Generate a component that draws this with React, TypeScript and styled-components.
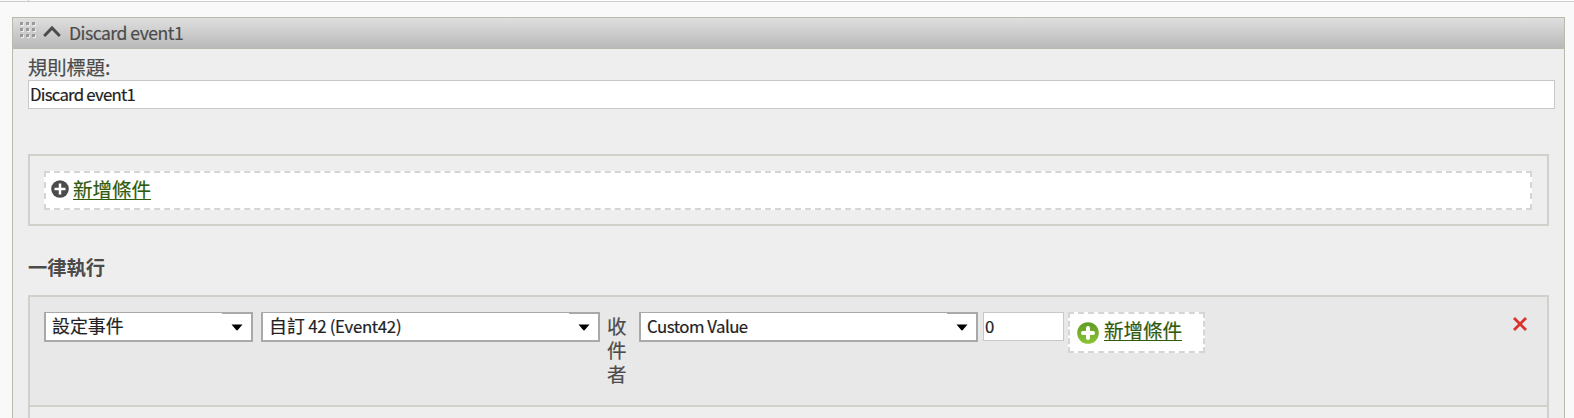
import React from "react";
import styled, { createGlobalStyle } from "styled-components";

const Global = createGlobalStyle`
  * { box-sizing: border-box; }
  html, body { margin: 0; height: 418px; overflow: hidden; background: #f9f9f9; }
  body { font-family: "Noto Sans CJK TC", sans-serif; color: #4b4b4b; -webkit-text-stroke: 0.2px; }
`;
const Page = styled.div`
  height: 418px;
  overflow: hidden;
`;
const TopStrip = styled.div`
  height: 2px;
  border-bottom: 1px solid #ccc;
  display: flex;
  &::before { content: ""; width: 28px; border-right: 1px solid #ccc; background: #f9f9f9; }
  background: #fff;
`;
const Panel = styled.section`
  margin: 15px 9px 0 12px;
  height: 440px;
  border: 1px solid #b9baae;
  background: #eee;
`;
const Header = styled.header`
  height: 31px;
  display: flex;
  align-items: flex-start;
  border-bottom: 1px solid #b9baae;
  background: linear-gradient(#dfdfdf, #b9b9b9);
`;
const Grip = styled.svg`
  margin: 4px 0 0 7px;
`;
const Chevron = styled.svg`
  margin: 7px 0 0 6px;
`;
const Title = styled.span`
  margin-left: 8px;
  font-size: 17.6px;
  letter-spacing: -0.5px;
  line-height: 30px;
  white-space: nowrap;
`;
const Body = styled.div`
  padding: 5px 9px 0 15px;
`;
const Label = styled.label`
  display: block;
  height: 26px;
  line-height: 26px;
  font-size: 19.3px;
`;
const TextInput = styled.input<{ $w: string }>`
  display: block;
  width: ${(p) => p.$w};
  height: 29px;
  padding: 0 1px 1px;
  border: 1px solid #c8c8c8;
  border-radius: 0;
  background: #fff;
  font: 16.8px "Noto Sans CJK TC", sans-serif;
  letter-spacing: -0.75px;
  color: #222;
  outline: none;
`;
const Conditions = styled.div`
  height: 72px;
  margin: 45px 6px 0 0;
  padding: 15px 15px 0 14px;
  border: 2px solid #d1d1cb;
`;
const DropZone = styled.div<{ $w?: number; $h: number; $left: number }>`
  display: flex;
  align-items: flex-start;
  width: ${(p) => (p.$w ? `${p.$w}px` : "auto")};
  height: ${(p) => p.$h}px;
  padding-left: ${(p) => p.$left}px;
  border: 2px dashed #d5d5d5;
  background: #fff;
`;
const AddLink = styled.a<{ $left: number }>`
  margin-left: ${(p) => p.$left}px;
  margin-top: 2px;
  height: 25px;
  font-size: 19.5px;
  line-height: 27px;
  color: #2f5b0c;
  white-space: nowrap;
  text-decoration: underline;
  text-decoration-thickness: 1px;
  text-underline-offset: 2px;
  text-decoration-skip-ink: none;
`;
const PlusIcon = styled.svg<{ $top: number }>`
  margin-top: ${(p) => p.$top}px;
  flex: none;
`;
const Heading = styled.h3`
  margin: 27px 0 14px;
  height: 28px;
  line-height: 28px;
  font-size: 19.3px;
  font-weight: 700;
  -webkit-text-stroke: 0;
`;
const Actions = styled.div`
  margin-right: 6px;
  height: 200px;
  border: 2px solid #d1d1cb;
`;
const ActionRow = styled.div`
  display: flex;
  align-items: flex-start;
  height: 110px;
  padding: 15px 0 0 14px;
  border-bottom: 2px solid #d1d1cb;
  background: #e8e8e8;
`;
const Select = styled.div<{ $w: number }>`
  display: flex;
  justify-content: space-between;
  width: ${(p) => p.$w}px;
  height: 30px;
  padding: 0 8px 0 6px;
  margin-right: 8px;
  border: 2px solid #a9a9a9;
  border-top-width: 1px;
  background: linear-gradient(#a9a9a9, #a9a9a9) right top / 29px 1px no-repeat #fff;
  background-origin: padding-box;
  font-size: 17.9px;
  line-height: 25px;
  color: #222;
  white-space: nowrap;
`;
const Latin = styled.span<{ $tracking: number }>`
  font-size: 16.8px;
  letter-spacing: ${(p) => p.$tracking}px;
`;
const Arrow = styled.svg`
  margin-top: 11px;
`;
const Recipient = styled.div`
  width: 20px;
  margin: 2px 12px 0 -1px;
  font-size: 19.5px;
  line-height: 24px;
  word-break: break-all;
`;
const ValueWrap = styled.div`
  margin: 0 4px 0 -3px;
`;
const Remove = styled.svg`
  margin: 4px 19px 0 auto;
`;

const Picker = ({ children, width }: { children: React.ReactNode; width: number }) => (
  <Select $w={width}>
    <span>{children}</span>
    <Arrow width="12" height="7" viewBox="0 0 12 7">
      <path d="M.5.5h11L7 5.800Q6 7 5 5.800Z" fill="#000" />
    </Arrow>
  </Select>
);

export default function App() {
  return (
    <Page>
      <Global />
      <TopStrip />
      <Panel>
        <Header>
          <Grip width="17" height="18" viewBox="0 0 17 18">
            {[0, 6, 12].flatMap((x) =>
              [0, 6, 12].map((y) => (
                <g key={`${x}-${y}`}>
                  <rect x={x + 1} y={y + 1} width="3" height="3" fill="#eee" />
                  <rect x={x} y={y} width="3" height="3" fill="#999" />
                </g>
              ))
            )}
          </Grip>
          <Chevron width="18" height="13" viewBox="0 0 18 13">
            <path d="M1.2 11 9 3l7.800 8" fill="none" stroke="#4b4b4b" strokeWidth="3" />
          </Chevron>
          <Title>Discard event1</Title>
        </Header>
        <Body>
          <Label>規則標題:</Label>
          <TextInput $w="1527px" defaultValue="Discard event1" />
          <Conditions>
            <DropZone $h={39} $left={5}>
              <PlusIcon $top={7} width="18" height="18" viewBox="0 0 18 18">
                <circle cx="9" cy="9" r="8.8" fill="#4b4b4b" />
                <path d="M9 3.500v11M3.500 9h11" stroke="#fff" strokeWidth="2.500" />
              </PlusIcon>
              <AddLink $left={4}>新增條件</AddLink>
            </DropZone>
          </Conditions>
          <Heading>一律執行</Heading>
          <Actions>
            <ActionRow>
              <Picker width={209}>設定事件</Picker>
              <Picker width={339}>
                自訂<Latin $tracking={-0.3}> 42 (Event42)</Latin>
              </Picker>
              <Recipient>收件者</Recipient>
              <Picker width={339}>
                <Latin $tracking={-0.5}>Custom Value</Latin>
              </Picker>
              <ValueWrap>
                <TextInput $w="81px" defaultValue="0" />
              </ValueWrap>
              <DropZone $w={137} $h={41} $left={7}>
                <PlusIcon $top={8} width="22" height="22" viewBox="0 0 22 22">
                  <defs>
                    <linearGradient id="leaf" x1="0" y1="0" x2="0" y2="1">
                      <stop offset="0" stopColor="#5f9a24" />
                      <stop offset="1" stopColor="#8cc437" />
                    </linearGradient>
                  </defs>
                  <circle cx="11" cy="11" r="10.800" fill="url(#leaf)" />
                  <path d="M11 6v10M6 11h10" stroke="#fff" strokeWidth="4" strokeLinecap="round" />
                </PlusIcon>
                <AddLink $left={5}>新增條件</AddLink>
              </DropZone>
              <Remove width="16" height="16" viewBox="0 0 16 16">
                <path d="m2 2 12 12M14 2 2 14" stroke="#d8332b" strokeWidth="2.800" />
              </Remove>
            </ActionRow>
          </Actions>
        </Body>
      </Panel>
    </Page>
  );
}
